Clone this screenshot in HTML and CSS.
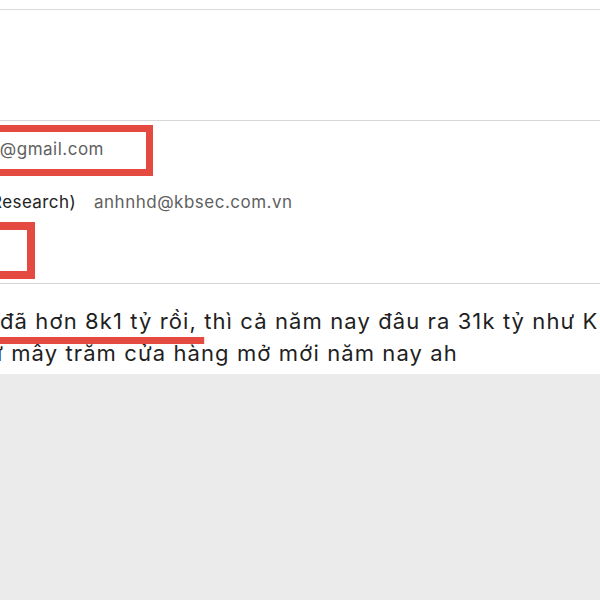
FILE: index.html
```html
<!DOCTYPE html>
<html>
<head>
    <title>Mail</title>
    <link rel="stylesheet" href="styles.css">
</head>
<body>
    <div id="mail">
        <div class="top-bar"></div>
        <div class="subject-area"></div>
        <div class="recipients">
            <div class="recipient-row">
                <span class="mark mark-addr"><span class="addr">minhtran@gmail.com</span></span>
            </div>
            <div class="recipient-row sender">
                <span class="name"><span>Nguyen Hoang Duc Anh (KB Research)</span></span>
                <span class="addr">anhnhd@kbsec.com.vn</span>
            </div>
            <div class="recipient-row">
                <span class="mark mark-empty"></span>
            </div>
        </div>
        <div class="message">
            <div class="line line-1"><span class="hidden-part">Quý 1 doanh thu </span><span class="underlined">đã hơn 8k1 tỷ rồi, </span>thì cả năm nay đâu ra 31k tỷ như KB dự báo</div>
            <div class="line line-2">như mây trăm cửa hàng mở mới năm nay ah</div>
        </div>
        <div class="footer-area"></div>
    </div>
</body>
</html>
```

FILE: styles.css
```css
body { margin: 0; background: #ebebeb; font-family: "Inter", "Noto Sans", sans-serif; }
#mail { width: 600px; height: 600px; overflow: hidden; display: flex; flex-direction: column; }

.top-bar { height: 9px; background: #fff; border-bottom: 1px solid #dadada; flex: none; }
.subject-area { height: 110px; background: #fff; border-bottom: 1px solid #d8d8d8; flex: none; }

.recipients { height: 162px; background: #fff; border-bottom: 1px solid #d4d4d4; flex: none; overflow: hidden; }
.recipient-row { display: flex; align-items: center; white-space: nowrap; }
.recipient-row .addr { color: #5f5f5f; font-size: 17px; letter-spacing: 0.5px; }
.mark { display: inline-block; border: 7px solid #e54a40; box-sizing: border-box; flex: none; }
.mark-addr {
    margin: 4px 0 0 -200px;
    height: 51px;
    width: 353px;
    display: flex;
    align-items: center;
    justify-content: flex-end;
    padding: 0 42px 4px 0;
}
.sender { margin-top: 14px; height: 24px; }
.sender .name {
    flex: none;
    display: flex;
    justify-content: flex-end;
    width: 276px;
    margin-left: -200px;
    overflow: hidden;
    color: #222;
    font-size: 17px;
    letter-spacing: 0.4px;
}
.sender .addr { margin-left: 18px; }
.mark-empty { margin: 8px 0 0 -40px; width: 75px; height: 57px; border-width: 8px; }

.message { background: #fff; height: 90px; flex: none; overflow: hidden; padding-top: 21px; box-sizing: border-box; }
.line { white-space: nowrap; font-size: 22px; color: #1f1f1f; line-height: 32px; letter-spacing: 1.1px; }
.line-1 { margin-left: -160px; }
.hidden-part { display: inline-block; width: 160px; overflow: hidden; vertical-align: top; }
.underlined {
    text-decoration: underline;
    text-decoration-color: #e54a40;
    text-decoration-thickness: 7px;
    text-underline-offset: 8px;
    text-decoration-skip-ink: none;
}
.line-2 { margin-left: -39px; }

.footer-area { flex: 1; background: #ebebeb; }
```
